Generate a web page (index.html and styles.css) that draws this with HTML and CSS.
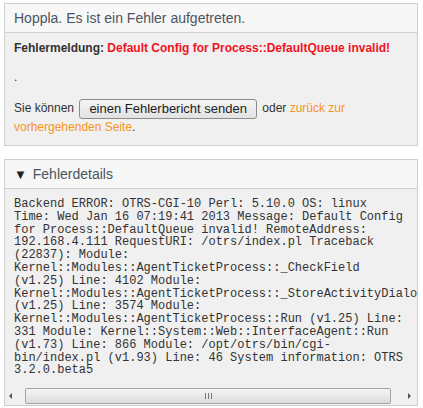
FILE: index.html
```html
<!DOCTYPE html>
<html lang="de">
<head>
    <meta charset="UTF-8">
    <title>Fehler</title>
    <link rel="stylesheet" href="styles.css">
</head>
<body>
    <div class="box">
        <div class="box-header">Hoppla. Es ist ein Fehler aufgetreten.</div>
        <div class="box-content">
            <p class="message"><strong>Fehlermeldung:</strong> <span class="error">Default Config for Process::DefaultQueue invalid!</span></p>
            <p class="dot">.</p>
            <p class="actions">Sie können <button class="btn">einen Fehlerbericht senden</button> oder <a href="#">zurück zur vorhergehenden Seite</a>.</p>
        </div>
    </div>

    <div class="box details">
        <div class="box-header"><span class="toggle">&#9660;</span> Fehlerdetails</div>
        <div class="box-content">
            <div class="trace">Backend ERROR: OTRS-CGI-10 Perl: 5.10.0 OS: linux Time: Wed Jan 16 07:19:41 2013 Message: Default Config for Process::DefaultQueue invalid! RemoteAddress: 192.168.4.111 RequestURI: /otrs/index.pl Traceback (22837): Module: Kernel::Modules::AgentTicketProcess::_CheckField (v1.25) Line: 4102 Module: Kernel::Modules::AgentTicketProcess::_StoreActivityDialog (v1.25) Line: 3574 Module: Kernel::Modules::AgentTicketProcess::Run (v1.25) Line: 331 Module: Kernel::System::Web::InterfaceAgent::Run (v1.73) Line: 866 Module: /opt/otrs/bin/cgi-bin/index.pl (v1.93) Line: 46 System information: OTRS 3.2.0.beta5</div>
            <div class="hscroll">
                <span class="arrow left"></span>
                <span class="thumb"><span class="grip"></span></span>
                <span class="arrow right"></span>
            </div>
        </div>
    </div>
</body>
</html>
```

FILE: styles.css
```css
body {
    margin: 3px 5px 0 4px;
    font-family: "Liberation Sans", Arial, sans-serif;
    font-size: 12px;
    color: #333;
    background: #fff;
}

.box {
    border: 1px solid #cfcfcf;
    background: #f0f0f0;
}

.box-header {
    height: 28px;
    line-height: 28px;
    padding: 0 9px;
    background: #f7f7f7;
    border-bottom: 1px solid #d0d0d0;
    font-size: 14px;
    color: #4b5560;
}

.box-content {
    padding: 8px 9px 8px 9px;
}

p {
    margin: 0;
    line-height: 15px;
}

.message strong {
    color: #333;
}

.error {
    color: #f0131e;
    font-weight: bold;
}

.dot {
    margin-top: 14px;
}

.actions {
    margin-top: 14px;
    line-height: 19px;
}

.btn {
    font-family: "Liberation Sans", Arial, sans-serif;
    font-size: 13px;
    color: #222;
    height: 20px;
    padding: 0 9px;
    margin: -2px 2px;
    border: 1px solid #8c8c8c;
    border-radius: 3px;
    background: linear-gradient(#f4f4f4, #e2e2e2);
    vertical-align: middle;
}

a {
    color: #f7941d;
    text-decoration: none;
}

.details {
    margin-top: 13px;
}

.details .box-content {
    padding: 9px 0 1px 0;
}

.toggle {
    font-size: 13px;
    margin-right: 2px;
    color: #222;
}

.trace {
    font-family: "Liberation Mono", "Courier New", monospace;
    font-size: 12px;
    line-height: 12.8px;
    color: #333;
    padding: 0 9px;
    overflow: hidden;
    word-wrap: normal;
}

.hscroll {
    display: flex;
    align-items: center;
    height: 16px;
    margin-top: 11px;
}

.arrow {
    width: 16px;
    height: 16px;
    position: relative;
}

.arrow::after {
    content: "";
    position: absolute;
    top: 5px;
    border: 3px solid transparent;
}

.arrow.left::after {
    left: 4px;
    border-right: 3px solid #555;
    border-left: 0;
}

.arrow.right::after {
    right: 6px;
    border-left: 3px solid #555;
    border-right: 0;
}

.thumb {
    flex: 1;
    height: 14px;
    margin: 0 10px 0 4px;
    border: 1px solid #a6a6a6;
    border-radius: 2px;
    background: linear-gradient(#f5f5f5, #dcdcdc);
    display: flex;
    justify-content: center;
    align-items: center;
}

.grip {
    width: 7px;
    height: 6px;
    border-left: 1px solid #777;
    border-right: 1px solid #777;
    position: relative;
    box-sizing: border-box;
}

.grip::after {
    content: "";
    position: absolute;
    left: 2px;
    top: 0;
    width: 1px;
    height: 6px;
    background: #777;
}
```
